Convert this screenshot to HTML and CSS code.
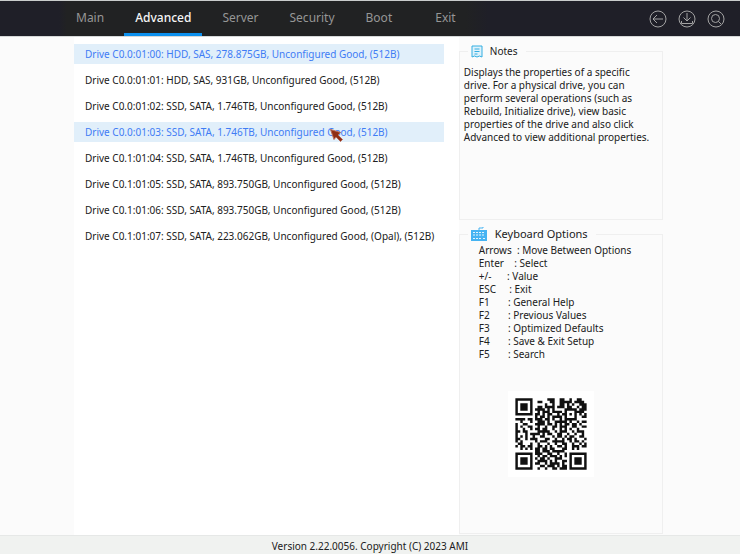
FILE: index.html
```html
<!doctype html>
<html lang="en-US">
  <head>
    <meta charset="utf-8">
    <title>Setup Utility - Advanced</title>
    <meta name="viewport" content="width=device-width, initial-scale=1">
    <link rel="stylesheet" href="styles.css">
  </head>
  <body>
<header class="topbar">
  <nav class="tabs">
    <a href="#main">Main</a>
    <a href="#advanced" class="active">Advanced</a>
    <a href="#server">Server</a>
    <a href="#security">Security</a>
    <a href="#boot">Boot</a>
    <a href="#exit" class="exit">Exit</a>
  </nav>
  <div class="tools">
    <button type="button" aria-label="Back">
      <svg viewBox="0 0 18 18"><circle cx="9" cy="9" r="8"/><path d="M14 9H4M8 5L4 9l4 4"/></svg>
    </button>
    <button type="button" aria-label="Save">
      <svg viewBox="0 0 18 18"><circle cx="9" cy="9" r="8"/><path d="M9 3v8M5.500 7.500L9 11l3.500-3.500M3.500 11v2.500h11V11"/></svg>
    </button>
    <button type="button" aria-label="Search">
      <svg viewBox="0 0 18 18"><circle cx="9" cy="9" r="8"/><circle cx="8.500" cy="8.500" r="4"/><path d="M11.500 11.500l2.500 2.500"/></svg>
    </button>
  </div>
</header>

<main class="content">
  <ul class="drives">
    <li><a href="#d0" class="selected">Drive C0.0:01:00: HDD, SAS, 278.875GB, Unconfigured Good, (512B)</a></li>
    <li><a href="#d1">Drive C0.0:01:01: HDD, SAS, 931GB, Unconfigured Good, (512B)</a></li>
    <li><a href="#d2">Drive C0.0:01:02: SSD, SATA, 1.746TB, Unconfigured Good, (512B)</a></li>
    <li>
      <a href="#d3" class="selected">Drive C0.0:01:03: SSD, SATA, 1.746TB, Unconfigured Good, (512B)</a>
      <svg class="pointer" viewBox="0 0 13 13"><path d="M0.500 0.500L10.500 3.500L8 6L12.500 10.500L10.500 12.500L6 8L4 10.500Z"/></svg>
    </li>
    <li><a href="#d4">Drive C0.1:01:04: SSD, SATA, 1.746TB, Unconfigured Good, (512B)</a></li>
    <li><a href="#d5">Drive C0.1:01:05: SSD, SATA, 893.750GB, Unconfigured Good, (512B)</a></li>
    <li><a href="#d6">Drive C0.1:01:06: SSD, SATA, 893.750GB, Unconfigured Good, (512B)</a></li>
    <li><a href="#d7">Drive C0.1:01:07: SSD, SATA, 223.062GB, Unconfigured Good, (Opal), (512B)</a></li>
  </ul>

  <aside class="side">
    <fieldset class="notes">
      <legend>
        <svg class="icon-note" viewBox="0 0 12 13"><path d="M1 1h10v11l-2.500-1-2.500 1-2.500-1-2.500 1zM3.500 4h5M3.500 6.500h5M3.500 9h3"/></svg>
        Notes
      </legend>
      <p>Displays the properties of a specific drive. For a physical drive, you can perform several operations (such as Rebuild, Initialize drive), view basic properties of the drive and also click Advanced to view additional properties.</p>
    </fieldset>

    <fieldset class="keyboard">
      <legend>
        <svg class="icon-keys" viewBox="0 0 16 14"><path class="body" d="M0 3h16v11H0z"/><path class="cable" d="M8 3V1h4V0"/><path class="caps" d="M2 5.500h12M2 8h12M2 11.500h2M5 11.500h6M12 11.500h2"/></svg>
        Keyboard Options
      </legend>
<pre>Arrows  : Move Between Options
Enter    : Select
+/-      : Value
ESC     : Exit
F1       : General Help
F2       : Previous Values
F3       : Optimized Defaults
F4       : Save &amp; Exit Setup
F5       : Search</pre>
      <svg class="qr" viewBox="-3 -3 35 35" role="img" aria-label="QR code"><path id="qrPath"/></svg>
    </fieldset>
  </aside>
</main>

<footer class="version">Version 2.22.0056. Copyright (C) 2023 AMI</footer>

<script src="qr.js"></script>
  </body>
</html>
```
FILE: styles.css
```css
* {
  box-sizing: border-box;
}

body {
  margin: 0;
  min-height: 100vh;
  display: flex;
  flex-direction: column;
  font-family: "Noto Sans", "Open Sans", sans-serif;
  font-size: 10px;
  line-height: 13px;
  color: #202020;
  background-color: #fbfbfb;
}

a {
  color: inherit;
  text-decoration: none;
}

.topbar {
  display: flex;
  justify-content: space-between;
  height: 37px;
  border-top: 1px solid #c9cccc;
  border-bottom: 1px solid #d5d8d8;
  padding: 0 15px 0 65px;
  background: linear-gradient(90deg, #1f1f28 8%, #212223 9%, #212223 63%, #1f1f28 66%);
}

.tabs {
  display: flex;
  gap: 9px;
}

.tabs a {
  padding: 8px 11px 0;
  font-size: 12px;
  line-height: 18px;
  color: #969696;
  border-bottom: 3px solid transparent;
}

.tabs .active {
  font-weight: 500;
  color: #f5f5f5;
  border-bottom-color: #0c90ee;
}

.tabs .exit {
  margin-left: 12px;
}

.tools {
  display: flex;
  align-items: center;
  gap: 11px;
}

.tools button {
  width: 18px;
  height: 18px;
  padding: 0;
  border: 0;
  background: none;
}

.tools svg {
  display: block;
  fill: none;
  stroke: #a3a3a3;
}

.content {
  flex: 1;
  display: grid;
  grid-template-columns: 10% 52% 1fr;
}

.drives {
  grid-column: 2;
  margin: 0;
  padding: 7px 15px 0 0;
  list-style: none;
  background-color: #fff;
  display: flex;
  flex-direction: column;
  gap: 6px;
}

.drives li {
  position: relative;
}

.drives a {
  display: block;
  padding-left: 11px;
  line-height: 20px;
  white-space: nowrap;
}

.drives .selected {
  color: #3f7cf5;
  background-color: #e1effa;
}

.pointer {
  position: absolute;
  left: 256px;
  top: 7px;
  width: 13px;
  height: 13px;
  fill: #8f2d14;
  stroke: #b76b58;
}

.side {
  display: flex;
  flex-direction: column;
  gap: 6px;
  max-width: 204px;
  padding: 6px 0 1px;
}

fieldset {
  min-width: 0;
  margin: 0;
  padding: 0;
  border: 1px solid #efefef;
}

legend {
  display: flex;
  align-items: center;
  margin-left: 8px;
  padding: 0 8px 0 3px;
  line-height: 16px;
}

.notes {
  height: 177px;
}

.notes p {
  margin: 7px 12px 0 4px;
}

.icon-note {
  width: 12px;
  height: 13px;
  margin-right: 7px;
  fill: #dff2fb;
  stroke: #33aee2;
}

.keyboard {
  flex: 1;
}

.keyboard legend {
  font-size: 11px;
}

.icon-keys {
  width: 16px;
  height: 14px;
  margin-right: 8px;
  fill: none;
}

.icon-keys .body {
  fill: #45b3f2;
}

.icon-keys .cable {
  stroke: #45b3f2;
}

.icon-keys .caps {
  stroke: #e2f4fd;
  stroke-dasharray: 2 1;
}

pre {
  margin: 2px 0 30px 19px;
  font: inherit;
}

.qr {
  display: block;
  width: 86px;
  height: 86px;
  margin-left: 48px;
  background-color: #fff;
  fill: #111;
}

.version {
  border-top: 1px solid #e6e8e7;
  padding: 4px 0 1px;
  text-align: center;
  background-color: #f0f2f0;
}
```
FILE: qr.js
```js
// one string per row, # is a dark module
const rows = [
  "#######......###..##..#..##..",
  "#.....#..##...##..#####.####.",
  "#.###.#.....#..#..##.#.#..###",
  "#.###.#..##.####.###.##..#.##",
  "#.###.#.####.#.#....#####.###",
  "#.....#..#.###.####.#...####.",
  "#######.##.#.##..#.##.#.#.#.#",
  "........#.##.#.####.#...#..##",
  "####.##.###.##.#..#.#####....",
  "..#...#..###.#..#####.#..#.##",
  "#..##...####.##.#.#.##.##.#..",
  "#.#..##..#..#..##.###..##..##",
  "#..#..#.##.##..#..#.#.#..#...",
  "##.##....#####..#.###..#.###.",
  "#...#.####.#.##..##..#..#..#.",
  "#.#.#..#..##...#.##.#.##..##.",
  "##..#.###...##..#..#.##.#...#",
  "#.#.....#.###..#####..#.##.#.",
  ".##...#..#...#..#..##..#..#.#",
  "#.##.##..##.#.#..##.#..###.##",
  "..#.#.#.##.##.##...##..#.#...",
  "........##.###.#####.........",
  "#######.###..##..#..#.#######",
  "#.....#..#.##.###.#.#.#.....#",
  "#.###.#.#.##.#..###...#.###.#",
  "#.###.#..####.#.#..##.#.###.#",
  "#.###.#.##..#.####.#..#.###.#",
  "#.....#...##.###.#.##.#.....#",
  "#######..#..#..##.###.#######"
];

let d = "";
rows.forEach((row, y) => {
  for (const run of row.matchAll(/#+/g)) {
    const w = run[0].length;
    d += `M${run.index} ${y}h${w}v1h-${w}z`;
  }
});
document.getElementById("qrPath").setAttribute("d", d);
```
